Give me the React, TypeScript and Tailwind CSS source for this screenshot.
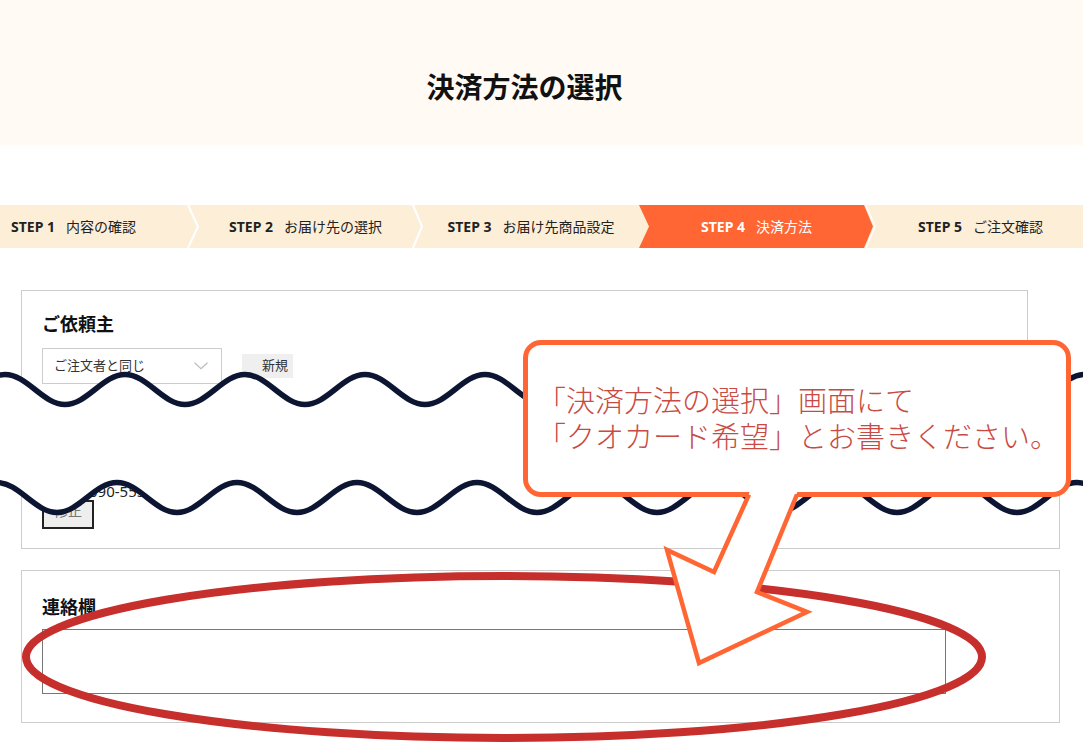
import React from "react";

function wavePath(x0: number, yc: number, yt: number, from: number, to: number) {
  let sx = x0;
  while (sx > from) sx -= 120;
  const start = sx;
  let d = `M ${sx} ${yc}`;
  while (sx < to) {
    d += ` C ${sx + 22} ${yc}, ${sx + 38} ${yt}, ${sx + 60} ${yt}`;
    d += ` C ${sx + 82} ${yt}, ${sx + 98} ${yc}, ${sx + 120} ${yc}`;
    sx += 120;
  }
  return { d, start, end: sx };
}

function Waves() {
  const top = wavePath(5, 374.5, 404.5, -20, 1110);
  const bot = wavePath(-3, 482.5, 512.5, -20, 1110);
  const fillA = `${top.d} L ${top.end} 478 L ${top.start} 478 Z`;
  const fillB = `${bot.d} L ${bot.end} 476 L ${bot.start} 476 Z`;
  return (
    <svg
      className="absolute left-0 top-0 pointer-events-none"
      width="1083"
      height="743"
      viewBox="0 0 1083 743"
    >
      <path d={fillA} fill="#ffffff" />
      <path d={fillB} fill="#ffffff" />
      <path d={top.d} fill="none" stroke="#0c1531" strokeWidth="5.5" strokeLinecap="round" />
      <path d={bot.d} fill="none" stroke="#0c1531" strokeWidth="5.5" strokeLinecap="round" />
    </svg>
  );
}

function Annotations() {
  return (
    <svg
      className="absolute left-0 top-0 pointer-events-none"
      width="1083"
      height="743"
      viewBox="0 0 1083 743"
    >
      <ellipse cx="504" cy="657" rx="478" ry="81" fill="none" stroke="#c62f2c" strokeWidth="8" />
      <polygon
        points="751,489 714,572 667,550 699,663 807,612 757,592 798.5,489"
        fill="#ffffff"
      />
      <polyline
        points="749,494.5 714,572 667,550 699,663 807,612 757,592 797,494.5"
        fill="none"
        stroke="#ff6633"
        strokeWidth="4.5"
        strokeLinejoin="miter"
      />
    </svg>
  );
}

function Step({
  num,
  label,
  className,
  active,
}: {
  num: string;
  label: string;
  className: string;
  active?: boolean;
}) {
  return (
    <div className={`flex items-center h-full ${className}`}>
      <span
        className={`text-[14px] font-bold leading-none ${active ? "text-white" : "text-[#222222]"}`}
      >
        STEP {num}
      </span>
      <span
        className={`ml-[11px] text-[14px] leading-none ${active ? "text-white" : "text-[#222222]"}`}
      >
        {label}
      </span>
    </div>
  );
}

function Stepper() {
  return (
    <div className="relative mt-[60px] h-[43px] w-full bg-[#fdeed7]">
      <svg
        className="absolute left-0 top-0"
        width="1083"
        height="43"
        viewBox="0 0 1083 43"
      >
        <polyline points="188,0 198,21.5 188,43" fill="none" stroke="#ffffff" strokeWidth="2" />
        <polyline points="413,0 422,21.5 413,43" fill="none" stroke="#ffffff" strokeWidth="2" />
        <polygon points="639,0 864,0 873,21.5 864,43 639,43 649,21.5" fill="#ff6633" />
        <polyline points="866,0 875,21.5 866,43" fill="none" stroke="#ffffff" strokeWidth="1.5" />
      </svg>
      <div className="relative flex h-full">
        <Step num="1" label="内容の確認" className="w-[188px] pl-[11px]" />
        <Step num="2" label="お届け先の選択" className="w-[225px] justify-center pl-[10px]" />
        <Step num="3" label="お届け先商品設定" className="w-[226px] justify-center pl-[10px]" />
        <Step num="4" label="決済方法" className="w-[225px] justify-center pl-[10px]" active />
        <Step num="5" label="ご注文確認" className="flex-1 justify-center pl-[14px]" />
      </div>
    </div>
  );
}

export default function App() {
  return (
    <div className="relative w-[1083px] h-[743px] overflow-hidden bg-white [font-family:'Noto_Sans','Noto_Sans_CJK_JP',sans-serif] text-[#222222]">
      {/* header */}
      <div className="h-[145px] w-full bg-[#fffaf3] flex items-center justify-center pr-[34px] pt-[29px]">
        <h1 className="text-[28px] font-bold leading-none text-[#111111]">決済方法の選択</h1>
      </div>

      <Stepper />

      {/* card 1 top part */}
      <div className="mt-[42px] ml-[21px] w-[1007px] h-[110px] border-x border-t border-[#cccccc] pt-[20px] pl-[20px]">
        <div className="text-[18px] font-bold leading-[27px] text-[#111111]">ご依頼主</div>
        <div className="mt-[10px] flex items-center">
          <div className="w-[180px] h-[36px] border border-[#cccccc] flex items-center justify-between pl-[11px] pr-[13px]">
            <span className="text-[13px] text-[#333333]">ご注文者と同じ</span>
            <svg width="14" height="8" viewBox="0 0 14 8">
              <polyline points="0.5,0.8 7,6.8 13.5,0.8" fill="none" stroke="#bbbbbb" strokeWidth="1.2" />
            </svg>
          </div>
          <div className="ml-[20px] h-[24px] bg-[#efefef] flex items-center pl-[20px] pr-[5px]">
            <span className="text-[13px] text-[#333333]">新規</span>
          </div>
        </div>
      </div>

      {/* cut band */}
      <div className="h-[70px]" />

      {/* card 1 bottom part */}
      <div className="ml-[21px] w-[1039px] h-[79px] border-x border-b border-[#cccccc] pt-[13px] pl-[20px]">
        <div className="ml-[47px] text-[15px] leading-[16px] text-[#222222]">090-5555-5555</div>
        <div className="mt-[1px] w-[52px] h-[29px] border-2 border-[#222222] bg-[#eeeeee] flex justify-center pt-[1px]">
          <span className="text-[14px] leading-[16px] text-[#777777]">修正</span>
        </div>
      </div>

      {/* card 2 */}
      <div className="mt-[21px] ml-[21px] w-[1039px] border border-[#cccccc] pt-[23px] pl-[20px] pb-[28px]">
        <div className="text-[18px] font-bold leading-[27px] text-[#111111]">連絡欄</div>
        <div className="mt-[8px] w-[904px] h-[65px] border border-[#777777] bg-white" />
      </div>

      <Waves />

      {/* speech bubble */}
      <div className="absolute left-[523px] top-[340px] w-[548px] h-[157px] border-[5px] border-[#ff6633] rounded-[18px] bg-white pl-[9px] pt-[38px]">
        <p className="text-[29px] font-light leading-[36px] text-[#c94a44] whitespace-nowrap">
          「決済方法の選択」画面にて
          <br />
          「クオカード希望」とお書きください。
        </p>
      </div>

      <Annotations />
    </div>
  );
}
